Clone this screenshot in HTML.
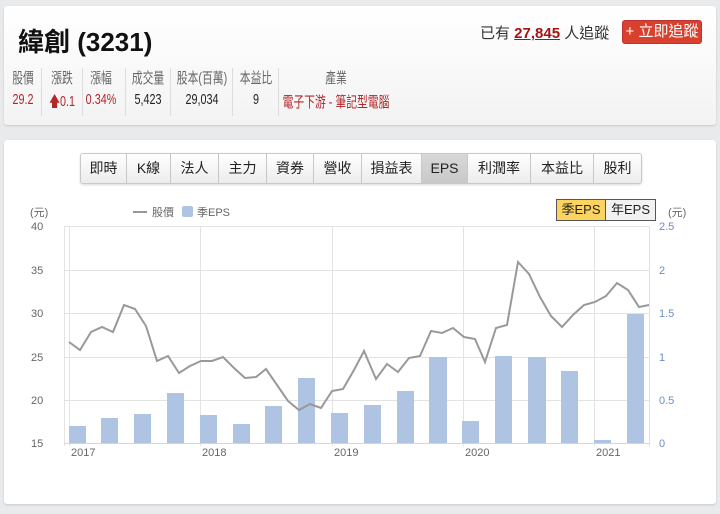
<!DOCTYPE html>
<html><head><meta charset="utf-8">
<style>
*{margin:0;padding:0;box-sizing:border-box}
body{width:720px;height:514px;background:#e9eaec;font-family:"Liberation Sans","Noto Sans CJK TC",sans-serif;position:relative;overflow:hidden;color:#222}
.card{position:absolute;background:#fff;border-radius:3px;box-shadow:0 1px 2px rgba(0,0,0,.15)}
#top{left:4px;top:6px;width:712px;height:119px;background:linear-gradient(#fff,#f3f3f3)}
#main{left:4px;top:140px;width:712px;height:364px}
.abs{position:absolute;white-space:nowrap}
.title{left:14px;top:16px;font-size:26px;font-weight:bold;color:#111}
.follow{left:476px;top:16px;font-size:15px;color:#333}
.follow b{color:#a31515;text-decoration:underline}
.btn{left:618px;top:14px;width:80px;height:24px;background:#d9412f;border:1px solid #b33;border-radius:3px;color:#fff;font-size:15px;text-align:center;line-height:22px}
.col{position:absolute;top:61px;width:0;font-size:15px}
.col div{position:absolute;left:0;transform:translateX(-50%) scaleX(0.72);white-space:nowrap}
.col .l{color:#666;top:0}
.col .v{color:#222;top:24px}
.red{color:#b3262a!important}
.div{position:absolute;top:62px;width:1px;height:48px;background:#ddd}
.tabs{position:absolute;left:76px;top:13px;height:31px;display:flex;border:1px solid #c8c8c8;border-radius:3px;background:linear-gradient(#fff,#ececec);box-shadow:0 1px 2px rgba(0,0,0,.15)}
.tabs div{border-right:1px solid #c8c8c8;font-size:14px;line-height:29px;text-align:center;color:#222}
.tabs div:last-child{border-right:none}
.tabs .on{background:linear-gradient(#d8d8d8,#c8c8c8)}
.eb{position:absolute;top:59px;height:22px;border:1px solid #555;font-size:13px;line-height:20px;text-align:center}
</style></head><body>
<div class="card" id="top">
 <div class="abs title">緯創 (3231)</div>
 <div class="abs follow">已有 <b>27,845</b> 人追蹤</div>
 <div class="abs btn">+ 立即追蹤</div>
 <div class="col" style="left:19px"><div class="l">股價</div><div class="v red">29.2</div></div>
 <div class="div" style="left:37px"></div>
 <div class="col" style="left:58px"><div class="l">漲跌</div><div class="v red">🡅0.1</div></div>
 <div class="div" style="left:78px"></div>
 <div class="col" style="left:97px"><div class="l">漲幅</div><div class="v red">0.34%</div></div>
 <div class="div" style="left:121px"></div>
 <div class="col" style="left:144px"><div class="l">成交量</div><div class="v">5,423</div></div>
 <div class="div" style="left:166px"></div>
 <div class="col" style="left:198px"><div class="l">股本(百萬)</div><div class="v">29,034</div></div>
 <div class="div" style="left:228px"></div>
 <div class="col" style="left:252px"><div class="l">本益比</div><div class="v">9</div></div>
 <div class="div" style="left:274px"></div>
 <div class="col" style="left:332px"><div class="l">產業</div><div class="v red">電子下游 - 筆記型電腦</div></div>
</div>
<div class="card" id="main">
 <div class="tabs">
  <div style="width:46px">即時</div><div style="width:44px">K線</div><div style="width:48px">法人</div><div style="width:48px">主力</div><div style="width:47px">資券</div><div style="width:48px">營收</div><div style="width:60px">損益表</div><div class="on" style="width:46px">EPS</div><div style="width:63px">利潤率</div><div style="width:63px">本益比</div><div style="width:47px">股利</div>
 </div>
 <div class="eb" style="left:552px;width:50px;background:#fcd35e">季EPS</div>
 <div class="eb" style="left:601px;width:51px;background:#f1f1f1">年EPS</div>
</div>
<svg class="abs" style="left:0;top:0" width="720" height="514" font-family="Liberation Sans,Noto Sans CJK TC,sans-serif" font-size="11">
 <g fill="#666"><text x="30" y="216">(元)</text><text x="668" y="216">(元)</text></g>
 <line x1="133" y1="212" x2="147" y2="212" stroke="#999" stroke-width="2"/>
 <text x="152" y="216" fill="#666">股價</text>
 <rect x="182" y="206" width="11" height="11" rx="2" fill="#aec4e2"/>
 <text x="197" y="216" fill="#666">季EPS</text>
 <g stroke="#e3e3e3" stroke-width="1">
  <line x1="64" y1="226.5" x2="650" y2="226.5"/><line x1="64" y1="270.5" x2="650" y2="270.5"/><line x1="64" y1="313.5" x2="650" y2="313.5"/><line x1="64" y1="357.5" x2="650" y2="357.5"/><line x1="64" y1="400.5" x2="650" y2="400.5"/>
  <line x1="64.5" y1="226" x2="64.5" y2="446"/><line x1="69.5" y1="226" x2="69.5" y2="446"/><line x1="200.5" y1="226" x2="200.5" y2="446"/><line x1="332.5" y1="226" x2="332.5" y2="446"/><line x1="463.5" y1="226" x2="463.5" y2="446"/><line x1="594.5" y1="226" x2="594.5" y2="446"/><line x1="649.5" y1="226" x2="649.5" y2="446"/>
 </g>
 <g fill="#aec4e2">
  <rect x="69" y="426" width="17" height="17"/><rect x="101" y="418" width="17" height="25"/><rect x="134" y="414" width="17" height="29"/><rect x="167" y="393" width="17" height="50"/><rect x="200" y="415" width="17" height="28"/><rect x="233" y="424" width="17" height="19"/><rect x="265" y="406" width="17" height="37"/><rect x="298" y="378" width="17" height="65"/><rect x="331" y="413" width="17" height="30"/><rect x="364" y="405" width="17" height="38"/><rect x="397" y="391" width="17" height="52"/><rect x="429" y="357" width="18" height="86"/><rect x="462" y="421" width="17" height="22"/><rect x="495" y="356" width="17" height="87"/><rect x="528" y="357" width="18" height="86"/><rect x="561" y="371" width="17" height="72"/><rect x="594" y="440" width="17" height="3"/><rect x="627" y="314" width="17" height="129"/>
 </g>
 <line x1="64" y1="443.5" x2="650" y2="443.5" stroke="#ccd6eb"/>
 <polyline fill="none" stroke="#999" stroke-width="2" points="69,342 80,350 91,332 102,327 113,332 124,305 135,309 146,326 157,361 168,356 179,373 190,366 201,361 212,361 223,357 234,368 245,378 256,377 266,369 277,385 288,401 299,410 310,404 321,408 332,391 343,389 354,370 364,351 376,379 387,364 398,372 409,358 420,356 431,331 442,333 453,328 464,337 475,339 485,362 496,328 507,325 518,262 529,274 540,297 551,316 562,327 573,315 584,305 595,302 606,296 617,283 628,290 639,307 649,305"/>
 <g fill="#666"><text x="31" y="230">40</text><text x="31" y="274">35</text><text x="31" y="317">30</text><text x="31" y="361">25</text><text x="31" y="404">20</text><text x="31" y="447">15</text></g>
 <g fill="#6d8ec4"><text x="659" y="230">2.5</text><text x="659" y="274">2</text><text x="659" y="317">1.5</text><text x="659" y="361">1</text><text x="659" y="404">0.5</text><text x="659" y="447">0</text></g>
 <g fill="#666"><text x="71" y="456">2017</text><text x="202" y="456">2018</text><text x="334" y="456">2019</text><text x="465" y="456">2020</text><text x="596" y="456">2021</text></g>
</svg>
</body></html>
